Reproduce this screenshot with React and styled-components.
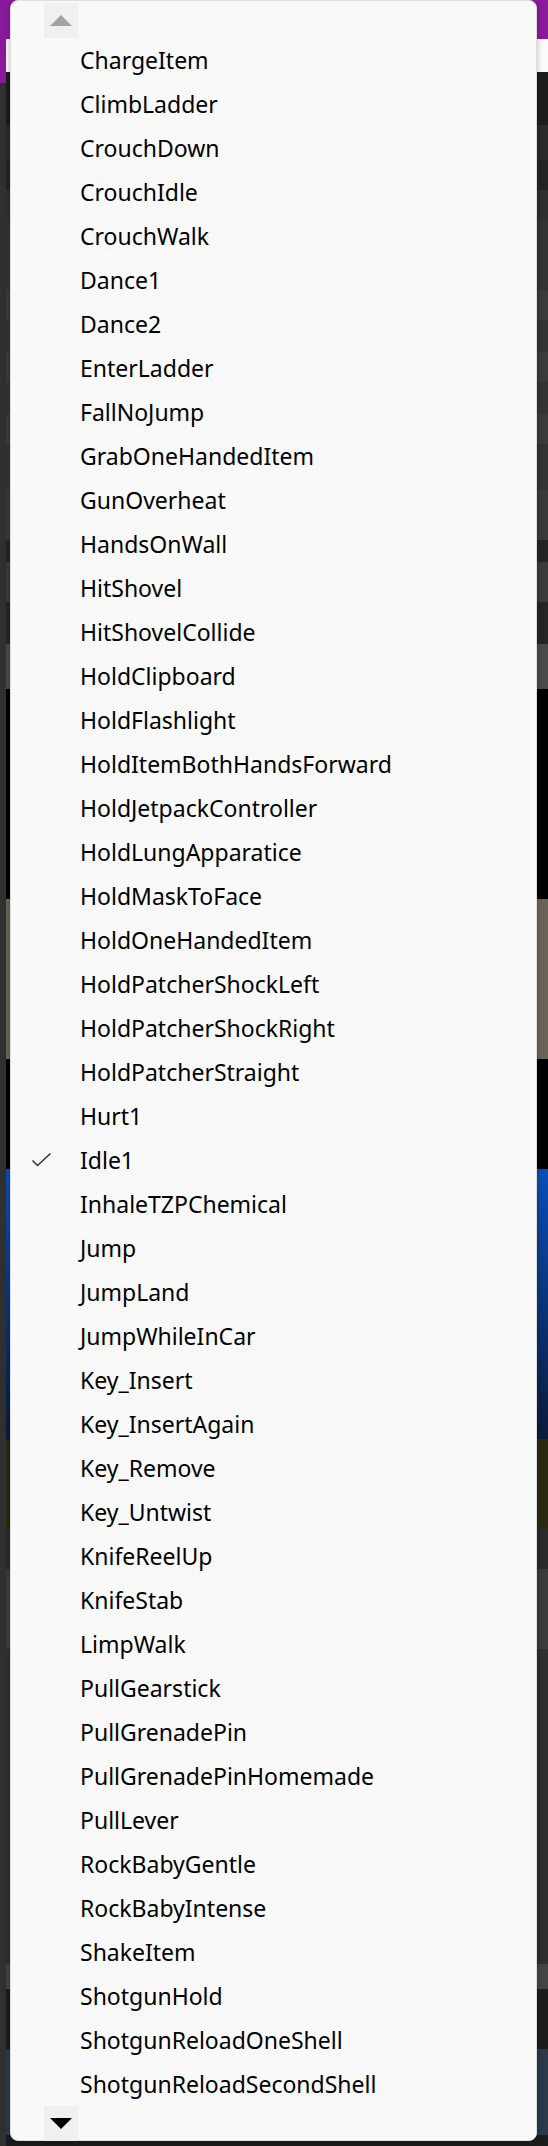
import React from "react";
import styled, { createGlobalStyle } from "styled-components";

const GlobalStyle = createGlobalStyle`
	html, body {
		margin: 0;
		padding: 0;
		background: #1c1c1c;
	}
	body {
		font-family: "Noto Sans", "Open Sans", sans-serif;
	}
`;

const animations = [
	"ChargeItem",
	"ClimbLadder",
	"CrouchDown",
	"CrouchIdle",
	"CrouchWalk",
	"Dance1",
	"Dance2",
	"EnterLadder",
	"FallNoJump",
	"GrabOneHandedItem",
	"GunOverheat",
	"HandsOnWall",
	"HitShovel",
	"HitShovelCollide",
	"HoldClipboard",
	"HoldFlashlight",
	"HoldItemBothHandsForward",
	"HoldJetpackController",
	"HoldLungApparatice",
	"HoldMaskToFace",
	"HoldOneHandedItem",
	"HoldPatcherShockLeft",
	"HoldPatcherShockRight",
	"HoldPatcherStraight",
	"Hurt1",
	"Idle1",
	"InhaleTZPChemical",
	"Jump",
	"JumpLand",
	"JumpWhileInCar",
	"Key_Insert",
	"Key_InsertAgain",
	"Key_Remove",
	"Key_Untwist",
	"KnifeReelUp",
	"KnifeStab",
	"LimpWalk",
	"PullGearstick",
	"PullGrenadePin",
	"PullGrenadePinHomemade",
	"PullLever",
	"RockBabyGentle",
	"RockBabyIntense",
	"ShakeItem",
	"ShotgunHold",
	"ShotgunReloadOneShell",
	"ShotgunReloadSecondShell",
];

// the editor page behind the open menu, only strips of it show
const bands = [
	{ h: 39, c: "#8a1a9c" },
	{ h: 33, c: "#fbfbfb" },
	{ h: 53, c: "#1c1c1c" },
	{ h: 35, c: "#2b2b2b" },
	{ h: 30, c: "#242424" },
	{ h: 30, c: "#2f2f2f" },
	{ h: 70, c: "#333333" },
	{ h: 30, c: "#3b3b3b" },
	{ h: 32, c: "#333333" },
	{ h: 30, c: "#3b3b3b" },
	{ h: 32, c: "#333333" },
	{ h: 30, c: "#3b3b3b" },
	{ h: 46, c: "#333333" },
	{ h: 50, c: "#3a3a3a" },
	{ h: 22, c: "#252525" },
	{ h: 40, c: "#3b3b3b" },
	{ h: 42, c: "#262626" },
	{ h: 45, c: "#4a4a4a" },
	{ h: 210, c: "#000000" },
	{ h: 160, c: "#6b6459" },
	{ h: 110, c: "#000000" },
	{ h: 270, c: "linear-gradient(#0a4fb8, #0b1a3a)" },
	{ h: 90, c: "#2b2a10" },
	{ h: 40, c: "#2b2b2b" },
	{ h: 80, c: "#3c3c3c" },
	{ h: 315, c: "#2f2f2f" },
	{ h: 25, c: "#444444" },
	{ h: 60, c: "#1c1c1c" },
	{ h: 86, c: "#2a3a48" },
];

const Page = styled.div`
	position: relative;
	width: 548px;
	height: 2146px;
	overflow: hidden;
	display: grid;
	grid-template-columns: 6px 1fr;
`;

const SideRail = styled.div`
	background: #303030;
	border-top: 83px solid #8a1a9c;
`;

const Bands = styled.div`
	display: flex;
	flex-direction: column;
	background: #1c1c1c;
`;

const Band = styled.div`
	flex: none;
	height: ${(p) => p.$h}px;
	background: ${(p) => p.$c};
`;

const Menu = styled.div`
	position: absolute;
	left: 10px;
	top: 0;
	width: 527px;
	height: 2141px;
	box-sizing: border-box;
	background: #f9f9f9;
	border: 1px solid #dedede;
	border-radius: 8px;
	box-shadow: 0 2px 6px rgba(0, 0, 0, 0.25);
	display: flex;
	flex-direction: column;
	padding: 2px 0 0;
`;

const ScrollButton = styled.div`
	flex: none;
	width: 34px;
	height: 35px;
	margin-left: 33px;
	background: #f0f0f0;
	display: flex;
	align-items: center;
	justify-content: center;
`;

const Arrow = styled.div`
	width: 0;
	height: 0;
	border-left: 11px solid transparent;
	border-right: 11px solid transparent;
	${(p) =>
		p.$up
			? `border-bottom: 11px solid #a3a3a3;`
			: `border-top: 11px solid #000;`}
`;

const List = styled.ul`
	list-style: none;
	margin: 0;
	padding: 0;
	display: flex;
	flex-direction: column;
`;

const Item = styled.li`
	position: relative;
	height: 44px;
	display: flex;
	align-items: center;
	padding-left: 69px;
	font-size: 23px;
	color: #000;
	white-space: nowrap;
`;

const Check = styled.svg`
	position: absolute;
	left: 20px;
	top: 50%;
	transform: translateY(-50%);
`;

export default function App() {
	return (
		<>
			<GlobalStyle />
			<Page>
				<SideRail />
				<Bands>
					{bands.map((b, i) => (
						<Band key={i} $h={b.h} $c={b.c} />
					))}
				</Bands>
				<Menu>
					<ScrollButton>
						<Arrow $up />
					</ScrollButton>
					<List>
						{animations.map((name) => (
							<Item key={name}>
								{name === "Idle1" && (
									<Check width="21" height="16" viewBox="0 0 21 16">
										<polyline
											points="1.5,8.5 6.5,13.5 19.5,1.5"
											fill="none"
											stroke="#333"
											strokeWidth="1.5"
										/>
									</Check>
								)}
								{name}
							</Item>
						))}
					</List>
					<ScrollButton>
						<Arrow />
					</ScrollButton>
				</Menu>
			</Page>
		</>
	);
}
